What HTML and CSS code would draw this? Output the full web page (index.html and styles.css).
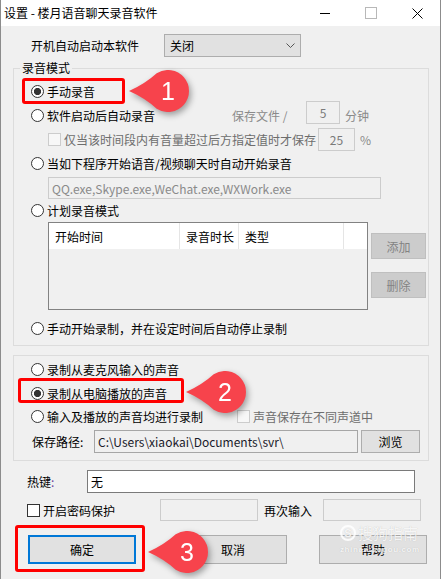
FILE: index.html
```html
<!doctype html>
<html lang="zh-CN">
  <head>
    <meta charset="UTF-8" />
    <title>设置 - 楼月语音聊天录音软件</title>
    <link rel="stylesheet" href="styles.css">
  </head>
  <body>
    <div class="window">
      <header class="title-bar">
        <span class="title">设置 - 楼月语音聊天录音软件</span>
        <div class="caption-buttons">
          <span class="caption-btn">
            <svg width="10" height="10"><line x1="0" y1="5.5" x2="10" y2="5.5" stroke="#000" /></svg>
          </span>
          <span class="caption-btn">
            <svg width="12" height="12"><rect x="0.5" y="0.5" width="11" height="11" fill="none" stroke="#b8b8b8" /></svg>
          </span>
          <span class="caption-btn">
            <svg width="11" height="11"><path d="M0.5 0.5 L10.5 10.5 M10.5 0.5 L0.5 10.5" stroke="#000" /></svg>
          </span>
        </div>
      </header>

      <main class="content">
        <div class="startup-row">
          <span class="startup-label">开机自动启动本软件</span>
          <div class="combo">
            <span>关闭</span>
            <svg class="chevron" width="9" height="6"><polyline points="0.5,0.5 4.5,4.5 8.5,0.5" fill="none" stroke="#555" /></svg>
          </div>
        </div>

        <!-- recording mode -->
        <fieldset class="group group-mode">
          <legend>录音模式</legend>
          <div class="opt opt-first"><span class="radio checked"></span>手动录音</div>
          <div class="opt">
            <span class="opt-main opt-main-auto"><span class="radio"></span>软件启动后自动录音</span>
            <span class="muted split-label">保存文件 /</span>
            <span class="field field-minutes">5</span>
            <span class="muted unit">分钟</span>
          </div>
          <div class="opt opt-indent">
            <span class="checkbox disabled"></span>
            <span class="muted check-label">仅当该时间段内有音量超过后方指定值时才保存</span>
            <span class="field field-pct">25</span>
            <span class="muted unit">%</span>
          </div>
          <div class="opt"><span class="radio"></span>当如下程序开始语音/视频聊天时自动开始录音</div>
          <div class="field app-list">QQ.exe,Skype.exe,WeChat.exe,WXWork.exe</div>
          <div class="opt opt-plan"><span class="radio"></span>计划录音模式</div>
          <div class="plan-area">
            <div class="plan-list">
              <div class="plan-head">
                <span class="col col-start">开始时间</span>
                <span class="col col-len">录音时长</span>
                <span class="col col-type">类型</span>
                <span class="col col-rest"></span>
              </div>
            </div>
            <div class="plan-buttons">
              <span class="btn btn-disabled">添加</span>
              <span class="btn btn-disabled">删除</span>
            </div>
          </div>
          <div class="opt opt-timed"><span class="radio"></span>手动开始录制，并在设定时间后自动停止录制</div>
        </fieldset>

        <!-- sound source -->
        <fieldset class="group group-source">
          <div class="opt"><span class="radio"></span>录制从麦克风输入的声音</div>
          <div class="opt"><span class="radio checked"></span>录制从电脑播放的声音</div>
          <div class="opt opt-both">
            <span class="opt-main opt-main-both"><span class="radio"></span>输入及播放的声音均进行录制</span>
            <span class="checkbox disabled"></span>
            <span class="muted">声音保存在不同声道中</span>
          </div>
          <div class="path-row">
            <span class="path-label">保存路径:</span>
            <span class="field path-field">C:\Users\xiaokai\Documents\svr\</span>
            <span class="btn btn-browse">浏览</span>
          </div>
        </fieldset>

        <div class="hotkey-row">
          <span class="hotkey-label">热键<span class="colon">:</span></span>
          <span class="field hotkey-field">无</span>
        </div>

        <div class="password-row">
          <span class="pw-check"><span class="checkbox"></span>开启密码保护</span>
          <span class="field pw-field"></span>
          <span class="pw-again">再次输入</span>
          <span class="field pw-field"></span>
        </div>

        <div class="action-row">
          <span class="btn btn-action btn-primary">确定</span>
          <span class="btn btn-action btn-cancel">取消</span>
          <span class="btn btn-action btn-help">帮助</span>
        </div>
      </main>

      <!-- annotations drawn over the dialog -->
      <div class="mark mark-1"></div>
      <div class="mark mark-2"></div>
      <div class="mark mark-3"></div>

      <div class="callout callout-1">
        <svg width="64" height="48">
          <path d="M1 24 Q17 17 28.7 6.3 A21 21 0 1 1 28.7 41.7 Q17 31 1 24 Z" fill="#f7434c" />
          <text x="40" y="33" text-anchor="middle">1</text>
        </svg>
      </div>
      <div class="callout callout-2">
        <svg width="64" height="48">
          <path d="M1 24 Q17 17 28.7 6.3 A21 21 0 1 1 28.7 41.7 Q17 31 1 24 Z" fill="#f7434c" />
          <text x="40" y="33" text-anchor="middle">2</text>
        </svg>
      </div>
      <div class="callout callout-3">
        <svg width="64" height="48">
          <path d="M1 24 Q17 17 28.7 6.3 A21 21 0 1 1 28.7 41.7 Q17 31 1 24 Z" fill="#f7434c" />
          <text x="40" y="33" text-anchor="middle">3</text>
        </svg>
      </div>

      <div class="watermark">
        <div class="wm-top"><span class="wm-logo">S</span><span class="wm-name">搜狗指南</span></div>
        <div class="wm-url">zhinan.sogou.com</div>
      </div>
    </div>
  </body>
</html>
```

FILE: styles.css
```css
:root {
  --face: #f0f0f0;
  --group-line: #dcdcdc;
  --btn-face: #e1e1e1;
  --btn-line: #adadad;
  --muted: #6d6d6d;
  --disabled-line: #cccccc;
  --mark-red: #ff0000;
  --focus-blue: #0078d7;
}

* {
  box-sizing: border-box;
}

body {
  margin: 0;
  font-family: 'Noto Sans CJK SC', 'Noto Sans', sans-serif;
  font-size: 12px;
  color: #000;
  background-color: #5d6b52;
}

.window {
  position: relative;
  width: 441px;
  height: 579px;
  background-color: var(--face);
  border-left: 1px solid #8c8c8c;
  border-right: 1px solid #8c8c8c;
  overflow: hidden;
}

.title-bar {
  display: flex;
  align-items: center;
  height: 26px;
  padding-left: 3px;
  background-color: #fff;
}

.title {
  line-height: 16px;
}

.caption-buttons {
  display: flex;
  height: 100%;
  margin-left: auto;
}

.caption-btn {
  display: flex;
  align-items: center;
  justify-content: center;
  width: 46px;
}

.content {
  padding: 8px 0 0 12px;
}

.startup-row {
  display: flex;
  align-items: center;
  height: 23px;
}

.startup-label {
  width: 133px;
  margin-left: 18px;
}

.combo {
  display: flex;
  align-items: center;
  width: 137px;
  height: 23px;
  padding: 0 5px;
  background-color: var(--btn-face);
  border: 1px solid var(--btn-line);
}

.chevron {
  margin-left: auto;
}

/* group boxes */
.group {
  width: 416px;
  min-width: 0;
  margin: 0;
  padding: 0 0 0 17px;
  border: 1px solid var(--group-line);
}

.group legend {
  margin-left: -11px;
  padding: 0 2px;
  line-height: 14px;
}

.group-mode {
  margin-top: 4px;
  padding-bottom: 5px;
}

.group-source {
  margin-top: 9px;
  padding-top: 1px;
  padding-bottom: 7px;
}

.opt {
  display: flex;
  align-items: center;
  height: 24px;
  white-space: nowrap;
}

.opt-first {
  margin-top: 4px;
}

.opt-main {
  display: flex;
  align-items: center;
}

.opt-main-auto {
  width: 201px;
}

.opt-main-both {
  width: 206px;
}

.opt-indent {
  padding-left: 17px;
}

.opt-plan {
  height: 23px;
}

.opt-timed {
  margin-top: 6px;
}

.opt-both {
  height: 22px;
}

.radio {
  flex: none;
  width: 13px;
  height: 13px;
  margin-right: 3px;
  background-color: #fff;
  border: 1px solid #333;
  border-radius: 50%;
}

.radio.checked {
  background: radial-gradient(circle, #333 0 3.3px, #fff 3.9px);
}

.checkbox {
  flex: none;
  width: 13px;
  height: 13px;
  margin-right: 3px;
  background-color: #fff;
  border: 1px solid #333;
}

.checkbox.disabled {
  background-color: #f7f7f7;
  border-color: var(--disabled-line);
}

.muted {
  color: var(--muted);
}

.split-label {
  width: 74px;
  color: #8a8a8a;
}

.unit {
  margin-left: 5px;
  color: #8a8a8a;
}

.check-label {
  width: 254px;
}

/* text boxes */
.field {
  display: flex;
  align-items: center;
  height: 23px;
  padding-left: 3px;
  background-color: var(--face);
  border: 1px solid var(--disabled-line);
  white-space: nowrap;
}

.field-minutes {
  align-self: flex-start;
  justify-content: center;
  width: 34px;
  margin-top: -2px;
  padding-left: 0;
  color: #7a7a7a;
}

.field-pct {
  justify-content: center;
  width: 37px;
  padding-left: 0;
  color: #7a7a7a;
}

.app-list {
  width: 333px;
  height: 22px;
  margin: 2px 0 0 17px;
  color: #8a8a8a;
}

/* schedule list */
.plan-area {
  display: flex;
  margin-left: 17px;
}

.plan-list {
  width: 320px;
  height: 88px;
  background-color: var(--face);
  border: 1px solid #828282;
}

.plan-head {
  display: flex;
  height: 26px;
  background-color: #fff;
}

.col {
  display: flex;
  align-items: center;
  padding-left: 6px;
  border-right: 1px solid #e5e5e5;
}

.col-start {
  width: 131px;
}

.col-len {
  width: 59px;
}

.col-type {
  width: 105px;
}

.col-rest {
  flex: 1;
  border-right: none;
}

.plan-buttons {
  display: flex;
  flex-direction: column;
  margin-left: 3px;
}

.btn {
  display: flex;
  align-items: center;
  justify-content: center;
  background-color: var(--btn-face);
  border: 1px solid var(--btn-line);
}

.btn-disabled {
  width: 55px;
  height: 26px;
  margin-top: 11px;
  color: #838383;
  background-color: #cccccc;
  border-color: #bfbfbf;
}

.btn-disabled + .btn-disabled {
  margin-top: 13px;
}

/* save path */
.path-row {
  display: flex;
  align-items: center;
  height: 23px;
  margin-top: 3px;
}

.path-label {
  width: 62px;
  margin-left: 1px;
}

.path-field {
  width: 264px;
  color: #1a1a2a;
  border-color: #a6a6a6;
}

.btn-browse {
  width: 59px;
  height: 23px;
  margin-left: 3px;
}

/* bottom rows */
.hotkey-row {
  display: flex;
  align-items: center;
  height: 23px;
  margin-top: 9px;
  padding-left: 14px;
}

.hotkey-label {
  width: 60px;
}

.colon {
  color: #6a3e9a;
}

.hotkey-field {
  width: 328px;
  background-color: #fff;
  border-color: #7a7a7a;
}

.password-row {
  display: flex;
  align-items: center;
  height: 22px;
  margin-top: 6px;
  padding-left: 14px;
}

.pw-check {
  display: flex;
  align-items: center;
  width: 133px;
}

.pw-field {
  width: 98px;
  height: 22px;
}

.pw-again {
  width: 59px;
  margin-left: 6px;
}

.action-row {
  display: flex;
  height: 29px;
  margin-top: 14px;
  padding-left: 15px;
}

.btn-action {
  width: 108px;
  height: 29px;
}

.btn-primary {
  border: 2px solid var(--focus-blue);
}

.btn-cancel {
  margin-left: 43px;
}

.btn-help {
  margin-left: 32px;
}

/* annotations */
.mark {
  position: absolute;
  border: 3px solid var(--mark-red);
  border-radius: 3px;
}

.mark-1 {
  left: 21px;
  top: 78px;
  width: 103px;
  height: 26px;
}

.mark-2 {
  left: 17px;
  top: 378px;
  width: 166px;
  height: 25px;
}

.mark-3 {
  left: 14px;
  top: 525px;
  width: 130px;
  height: 47px;
}

.callout {
  position: absolute;
  width: 64px;
  height: 48px;
  filter: drop-shadow(2px 3px 3px rgba(0, 0, 0, 0.35));
}

.callout svg {
  display: block;
}

.callout text {
  font-family: 'Liberation Sans', Arial, sans-serif;
  font-size: 25px;
  fill: #fff;
}

.callout-1 {
  left: 127px;
  top: 67px;
}

.callout-2 {
  left: 184px;
  top: 368px;
}

.callout-3 {
  left: 146px;
  top: 528px;
}

.watermark {
  position: absolute;
  left: 339px;
  top: 524px;
  color: rgba(255, 255, 255, 0.85);
  text-shadow: 0 0 1px rgba(0, 0, 0, 0.2);
}

.wm-top {
  display: flex;
  align-items: center;
}

.wm-logo {
  display: flex;
  align-items: center;
  justify-content: center;
  width: 16px;
  height: 16px;
  margin-right: 2px;
  font-family: 'Liberation Sans', Arial, sans-serif;
  font-size: 11px;
  font-weight: bold;
  border: 2px solid rgba(255, 255, 255, 0.85);
  border-radius: 50%;
}

.wm-name {
  font-size: 15px;
  line-height: 18px;
}

.wm-url {
  margin-top: 3px;
  font-family: 'Liberation Sans', Arial, sans-serif;
  font-size: 8px;
  font-weight: bold;
  letter-spacing: 0.6px;
  line-height: 9px;
}
```
